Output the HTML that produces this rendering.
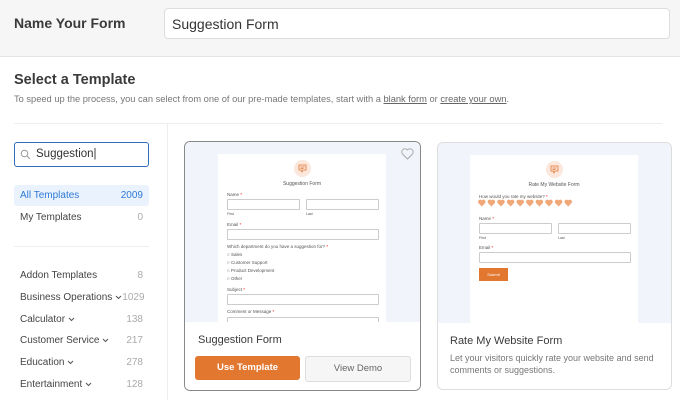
<!DOCTYPE html>
<html><head><meta charset="utf-8"><style>
*{box-sizing:border-box;margin:0;padding:0}
body{width:680px;height:400px;overflow:hidden;background:#fff;font-family:"Liberation Sans",sans-serif;color:#444;position:relative}
.abs{position:absolute}
.top{left:0;top:0;width:680px;height:57px;background:#f6f6f6;border-bottom:1px solid #e4e4e4}
.nm{left:14px;top:15px;font-size:14px;font-weight:bold;color:#3a3a3a}
.inp{left:164px;top:8px;width:506px;height:31px;background:#fff;border:1px solid #ddd;border-radius:4px;font-size:14px;padding:7px 7px;color:#333}
h2{position:absolute;left:14px;top:72px;font-size:14.5px;font-weight:bold;color:#3a3a3a}
.sub{left:14px;top:94px;font-size:9.3px;color:#777}
.sub u{color:#666}
.hr{left:14px;top:123px;width:648px;height:1px;background:#eee}
.vr{left:167px;top:124px;width:1px;height:276px;background:#eee}
.srch{left:14px;top:142px;width:135px;height:25px;border:1.3px solid #2f6db5;border-radius:3px;font-size:11.5px;padding:5px 0 0 21px;color:#333}
.item{left:20px;width:123px;font-size:10px;color:#444;display:flex;justify-content:space-between;white-space:nowrap}
.item span:last-child{color:#aaa}
.item svg{margin-left:3px;vertical-align:middle}
.sel{left:14px;top:185px;width:135px;height:21px;background:#eaf2fd;border-radius:3px}
.card{border-radius:6px;overflow:hidden;background:#fff}
.prev{left:0;top:0;width:100%;height:180px;background:#f1f5fb}
.paper{background:#fff;top:12px;height:168px}
.t{font-size:4.5px;color:#555;position:absolute;white-space:nowrap}
.f{position:absolute;border:0.8px solid #ccc;height:11px;border-radius:1px;background:#fff}
.ic{position:absolute;width:17px;height:17px;border-radius:50%;background:#fbe7dc}
.btn{position:absolute;border-radius:3px;font-size:9.5px;text-align:center;line-height:24px;font-weight:bold}
</style></head><body>
<div class="abs top"></div>
<div class="abs nm">Name Your Form</div>
<div class="abs inp">Suggestion Form</div>
<h2>Select a Template</h2>
<div class="abs sub">To speed up the process, you can select from one of our pre-made templates, start with a <u>blank form</u> or <u>create your own</u>.</div>
<div class="abs hr"></div>
<div class="abs vr"></div>
<div class="abs srch">Suggestion|</div>
<svg class="abs" style="left:20px;top:149px" width="11" height="11" viewBox="0 0 11 11"><circle cx="4.5" cy="4.5" r="3.3" fill="none" stroke="#999" stroke-width="1"/><path d="M7 7L10 10" stroke="#999" stroke-width="1"/></svg>
<div class="abs sel"></div>
<div class="abs item" style="top:190px"><span style="color:#2f7ad6">All Templates</span><span style="color:#2f7ad6">2009</span></div>
<div class="abs item" style="top:212px"><span>My Templates</span><span>0</span></div>
<div class="abs" style="left:14px;top:246px;width:135px;height:1px;background:#eee"></div>
<div class="abs item" style="top:270px"><span>Addon Templates</span><span>8</span></div>
<div class="abs item" style="top:292px"><span>Business Operations<svg width="7" height="5" viewBox="0 0 7 5"><path d="M1 1L3.5 3.5L6 1" fill="none" stroke="#555" stroke-width="1"/></svg></span><span>1029</span></div>
<div class="abs item" style="top:314px"><span>Calculator<svg width="7" height="5" viewBox="0 0 7 5"><path d="M1 1L3.5 3.5L6 1" fill="none" stroke="#555" stroke-width="1"/></svg></span><span>138</span></div>
<div class="abs item" style="top:335px"><span>Customer Service<svg width="7" height="5" viewBox="0 0 7 5"><path d="M1 1L3.5 3.5L6 1" fill="none" stroke="#555" stroke-width="1"/></svg></span><span>217</span></div>
<div class="abs item" style="top:357px"><span>Education<svg width="7" height="5" viewBox="0 0 7 5"><path d="M1 1L3.5 3.5L6 1" fill="none" stroke="#555" stroke-width="1"/></svg></span><span>278</span></div>
<div class="abs item" style="top:379px"><span>Entertainment<svg width="7" height="5" viewBox="0 0 7 5"><path d="M1 1L3.5 3.5L6 1" fill="none" stroke="#555" stroke-width="1"/></svg></span><span>128</span></div>

<div class="abs card" style="left:184px;top:141px;width:237px;height:250px;border:1.3px solid #888">
 <div class="abs prev"></div>
 <div class="abs paper" style="left:33px;width:168px">
  <div class="ic" style="left:76px;top:6px"><svg width="17" height="17" viewBox="0 0 17 17"><path d="M5 5H12V10H9L8 12L7 10H5Z" fill="none" stroke="#e27730" stroke-width="0.8"/><path d="M6.5 7H10.5M6.5 8.5H9.5" stroke="#e27730" stroke-width="0.7"/></svg></div>
  <div class="t" style="left:0;width:168px;text-align:center;top:27px;font-size:5px">Suggestion Form</div>
  <div class="t" style="left:9px;top:38px">Name <span style="color:red">*</span></div>
  <div class="f" style="left:9px;top:45px;width:73px"></div><div class="f" style="left:88px;top:45px;width:73px"></div>
  <div class="t" style="left:9px;top:58px;font-size:3.5px">First</div><div class="t" style="left:88px;top:58px;font-size:3.5px">Last</div>
  <div class="t" style="left:9px;top:68px">Email <span style="color:red">*</span></div>
  <div class="f" style="left:9px;top:75px;width:152px"></div>
  <div class="t" style="left:9px;top:90px">Which department do you have a suggestion for? <span style="color:red">*</span></div>
  <div class="t" style="left:9px;top:98px">○ Sales</div>
  <div class="t" style="left:9px;top:106px">○ Customer Support</div>
  <div class="t" style="left:9px;top:114px">○ Product Development</div>
  <div class="t" style="left:9px;top:122px">○ Other</div>
  <div class="t" style="left:9px;top:133px">Subject <span style="color:red">*</span></div>
  <div class="f" style="left:9px;top:140px;width:152px"></div>
  <div class="t" style="left:9px;top:155px">Comment or Message <span style="color:red">*</span></div>
  <div class="f" style="left:9px;top:163px;width:152px"></div>
 </div>
 <svg class="abs" style="left:216px;top:6px" width="13" height="12" viewBox="0 0 13 12"><path d="M6.5 11L1.5 6A3 3 0 0 1 6.5 2A3 3 0 0 1 11.5 6Z" fill="none" stroke="#aaa" stroke-width="1"/></svg>
 <div class="abs" style="left:0;top:180px;width:100%;height:70px;background:#fff"></div>
 <div class="abs" style="left:13px;top:192px;font-size:11px;color:#3a3a3a">Suggestion Form</div>
 <div class="btn" style="left:10px;top:214px;width:105px;background:#e27730;color:#fff">Use Template</div>
 <div class="btn" style="left:120px;top:214px;width:106px;background:#f6f6f6;border:1px solid #ddd;color:#666;font-weight:normal">View Demo</div>
</div>

<div class="abs card" style="left:437px;top:142px;width:235px;height:248px;border:1px solid #ddd">
 <div class="abs prev"></div>
 <div class="abs paper" style="left:32px;width:168px">
  <div class="ic" style="left:76px;top:6px"><svg width="17" height="17" viewBox="0 0 17 17"><path d="M5 5H12V10H9L8 12L7 10H5Z" fill="none" stroke="#e27730" stroke-width="0.8"/><path d="M6.5 7H10.5M6.5 8.5H9.5" stroke="#e27730" stroke-width="0.7"/></svg></div>
  <div class="t" style="left:0;width:168px;text-align:center;top:27px;font-size:5px">Rate My Website Form</div>
  <div class="t" style="left:9px;top:39px">How would you rate my website? <span style="color:red">*</span></div>
  <svg style="position:absolute;left:8px;top:44px" width="100" height="8" viewBox="0 0 100 8">
   <defs><path id="h" d="M3.8 7.5L0.6 4.3A2 2 0 0 1 3.8 1.3A2 2 0 0 1 7 4.3Z"/></defs>
   <g fill="#f0a878"><use href="#h" x="0"/><use href="#h" x="9.6"/><use href="#h" x="19.2"/><use href="#h" x="28.8"/><use href="#h" x="38.4"/><use href="#h" x="48"/><use href="#h" x="57.6"/><use href="#h" x="67.2"/><use href="#h" x="76.8"/><use href="#h" x="86.4"/></g>
  </svg>
  <div class="t" style="left:9px;top:61px">Name <span style="color:red">*</span></div>
  <div class="f" style="left:9px;top:68px;width:73px"></div><div class="f" style="left:88px;top:68px;width:73px"></div>
  <div class="t" style="left:9px;top:81px;font-size:3.5px">First</div><div class="t" style="left:88px;top:81px;font-size:3.5px">Last</div>
  <div class="t" style="left:9px;top:90px">Email <span style="color:red">*</span></div>
  <div class="f" style="left:9px;top:97px;width:152px"></div>
  <div style="position:absolute;left:9px;top:113px;width:29px;height:13px;background:#e27730;color:#fff;font-size:4px;text-align:center;line-height:13px">Submit</div>
 </div>
 <div class="abs" style="left:0;top:180px;width:100%;height:70px;background:#fff"></div>
 <div class="abs" style="left:12px;top:192px;font-size:11px;color:#3a3a3a">Rate My Website Form</div>
 <div class="abs" style="left:12px;top:209px;width:215px;font-size:9px;line-height:12px;color:#777">Let your visitors quickly rate your website and send comments or suggestions.</div>
</div>
</body></html>
